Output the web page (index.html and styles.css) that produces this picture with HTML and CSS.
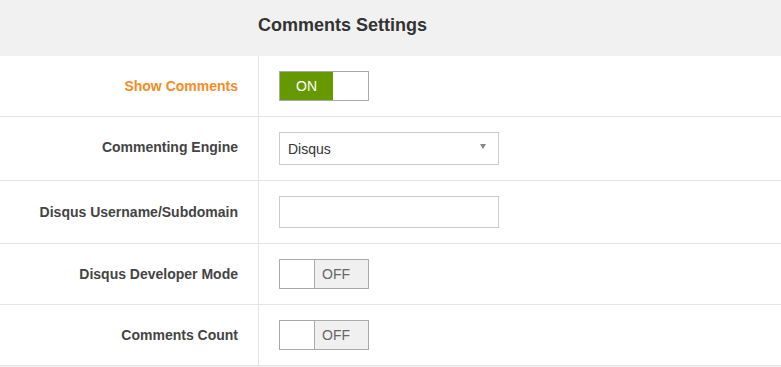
FILE: index.html
```html
<!DOCTYPE html>
<html>
<head>
<meta charset="utf-8">
<link rel="stylesheet" href="styles.css">
</head>
<body>
<div class="panel">
  <div class="panel-head">Comments Settings</div>
  <div class="rows">
    <div class="row">
      <div class="label label-active">Show Comments</div>
      <div class="control">
        <div class="toggle toggle-on"><span class="state on">ON</span><span class="knob"></span></div>
      </div>
    </div>
    <div class="row">
      <div class="label label-up">Commenting Engine</div>
      <div class="control">
        <div class="select"><span class="select-text">Disqus</span><span class="caret"></span></div>
      </div>
    </div>
    <div class="row">
      <div class="label">Disqus Username/Subdomain</div>
      <div class="control">
        <div class="input"></div>
      </div>
    </div>
    <div class="row">
      <div class="label">Disqus Developer Mode</div>
      <div class="control">
        <div class="toggle toggle-off"><span class="knob"></span><span class="state off">OFF</span></div>
      </div>
    </div>
    <div class="row">
      <div class="label">Comments Count</div>
      <div class="control">
        <div class="toggle toggle-off"><span class="knob"></span><span class="state off">OFF</span></div>
      </div>
    </div>
  </div>
</div>
</body>
</html>
```
FILE: styles.css
```css
html, body {
  margin: 0;
  padding: 0;
  background: #f1f1f1;
  font-family: "Liberation Sans", Arial, sans-serif;
}

.panel {
  width: 781px;
}

.panel-head {
  height: 56px;
  box-sizing: border-box;
  padding-left: 258px;
  padding-bottom: 4px;
  line-height: 51px;
  font-size: 18px;
  font-weight: bold;
  color: #333;
  background: #f1f1f1;
}

.rows {
  background: #fff;
}

.row {
  display: grid;
  grid-template-columns: 259px 1fr;
  border-bottom: 1px solid #e4e4e4;
}

.label {
  display: flex;
  align-items: center;
  justify-content: flex-end;
  padding-right: 20px;
  border-right: 1px solid #e4e4e4;
  font-size: 14px;
  font-weight: bold;
  color: #444;
}

.label-up {
  padding-bottom: 3px;
}

.label-active {
  color: #f68b1f;
}

.control {
  padding: 15px 20px;
  display: flex;
  align-items: center;
}

.toggle {
  display: flex;
  width: 88px;
  height: 28px;
  border: 1px solid #aaa;
  background: #fff;
}

.knob {
  width: 34px;
  background: #fff;
}

.toggle-on .knob {
  width: 35px;
}

.state {
  display: flex;
  align-items: center;
  font-size: 14px;
}

.state.on {
  width: 53px;
  justify-content: center;
  background: #669900;
  color: #fff;
}

.state.off {
  box-sizing: border-box;
  padding-left: 7px;
  border-left: 1px solid #aaa;
  width: 54px;
  background: #f0f0f0;
  color: #666;
}

.select {
  width: 220px;
  height: 33px;
  box-sizing: border-box;
  border: 1px solid #ccc;
  display: flex;
  align-items: center;
  justify-content: space-between;
  padding: 0 12px 0 8px;
  background: #fff;
}

.select-text {
  font-size: 14px;
  color: #333;
}

.caret {
  width: 0;
  height: 0;
  border-left: 3px solid transparent;
  border-right: 3px solid transparent;
  border-top: 5px solid #888;
  margin-top: -4px;
}

.input {
  width: 220px;
  height: 32px;
  box-sizing: border-box;
  border: 1px solid #ccc;
  background: #fff;
}
```
